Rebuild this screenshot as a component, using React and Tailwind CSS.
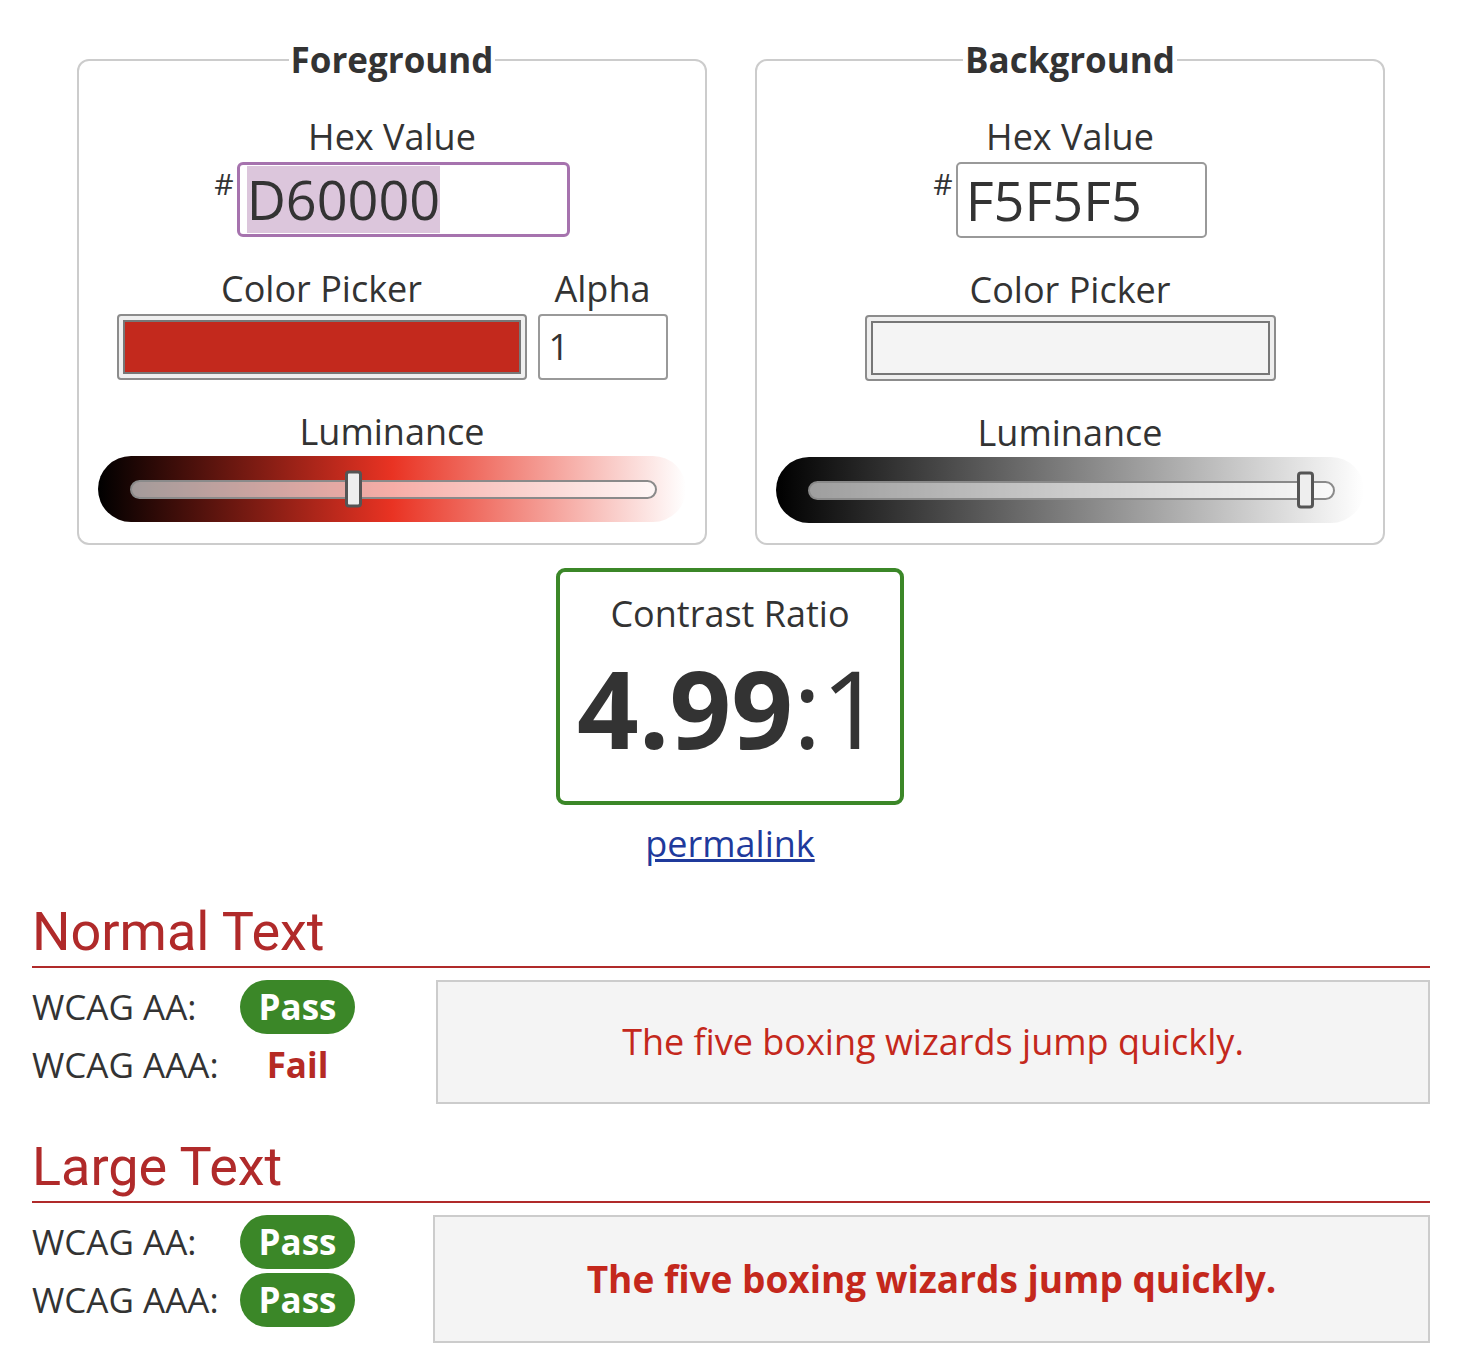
const Label = ({ children }) => (
  <div className="text-[36px] leading-[40px] text-[#333]">{children}</div>
);

const Slider = ({ gradient, thumb }) => (
  <div className={`mt-[4px] flex h-[66px] w-[588px] items-center rounded-full pl-[32px] pr-[29px] ${gradient}`}>
    <div className="relative h-[19px] flex-1 rounded-full border-2 border-[#8a8a8a] bg-white/60">
      <div className={`absolute top-1/2 h-[37px] w-[17px] -translate-y-1/2 rounded-[4px] border-[3px] border-[#555] bg-[#eee] ${thumb}`} />
    </div>
  </div>
);

const ColorBox = ({ swatch, width }) => (
  <div className={`flex h-[66px] ${width} rounded-[4px] border-2 border-[#8c8c8c] bg-[#efefef] p-[4px]`}>
    <div className={`flex-1 border-2 border-[#777] ${swatch}`} />
  </div>
);

const Badge = ({ pass }) =>
  pass ? (
    <div className="w-[115px] rounded-full bg-[#3b8728] text-center text-[35px] font-bold leading-[54px] text-white">
      Pass
    </div>
  ) : (
    <div className="w-[115px] text-center text-[35px] font-bold leading-[54px] text-[#b52a24]">Fail</div>
  );

const Result = ({ title, aa, aaa, large, mt, boxH, boxL }) => (
  <section className={mt}>
    <h2 className="border-b-2 border-[#b02a2a] pb-[4px] font-['Roboto',sans-serif] text-[54px] leading-[60px] text-[#b02a2a]">
      {title}
    </h2>
    <div className="mt-[12px] flex">
      <div className={`flex ${boxL} flex-col gap-[4px]`}>
        {[
          ['WCAG AA:', aa],
          ['WCAG AAA:', aaa],
        ].map(([label, pass]) => (
          <div key={label} className="flex items-center">
            <div className="w-[208px] text-[35px] leading-[54px] text-[#333]">{label}</div>
            <Badge pass={pass} />
          </div>
        ))}
      </div>
      <div
        className={`flex flex-1 items-center justify-center border-2 border-[#ccc] bg-[#f4f4f4] text-[#c4281c] ${boxH} ${
          large ? 'text-[37px] font-bold' : 'text-[36px]'
        }`}
      >
        The five boxing wizards jump quickly.
      </div>
    </div>
  </section>
);

export default function App() {
  return (
    <div className="min-h-[1360px] bg-white pb-[16px] font-['Open_Sans',sans-serif] text-[#333]">
      <div className="ml-[77px] flex gap-[48px] pt-[40px]">
        <fieldset className="flex w-[630px] flex-col items-center rounded-[12px] border-2 border-[#ccc] px-0 pb-[20px] pt-[37px]">
          <legend className="mx-auto px-[2px] text-[35px] font-bold leading-[40px] text-[#333]">Foreground</legend>
          <Label>Hex Value</Label>
          <div className="mt-[5px] flex">
            <span className="mr-[3px] mt-[6px] text-[30px] leading-[32px]">#</span>
            <div className="flex h-[75px] w-[333px] items-center rounded-[6px] border-[3px] border-[#a673ae] pl-[7px]">
              <span className="bg-[#dcc6dc] text-[54px] leading-[67px] text-[#333]">D60000</span>
            </div>
          </div>
          <div className="mt-[32px] flex gap-[11px]">
            <div className="flex flex-col items-center">
              <Label>Color Picker</Label>
              <div className="mt-[5px]">
                <ColorBox swatch="bg-[#c3291d]" width="w-[410px]" />
              </div>
            </div>
            <div className="flex flex-col items-center">
              <Label>Alpha</Label>
              <div className="mt-[5px] flex h-[66px] w-[130px] items-center rounded-[4px] border-2 border-[#999] pl-[9px] text-[36px]">
                1
              </div>
            </div>
          </div>
          <div className="mt-[32px]">
            <Label>Luminance</Label>
          </div>
          <Slider gradient="bg-[linear-gradient(to_right,#000,#e93323_50%,#fff)]" thumb="left-[213px]" />
        </fieldset>

        <fieldset className="flex w-[630px] flex-col items-center rounded-[12px] border-2 border-[#ccc] px-0 pb-[20px] pt-[37px]">
          <legend className="mx-auto px-[2px] text-[35px] font-bold leading-[40px] text-[#333]">Background</legend>
          <Label>Hex Value</Label>
          <div className="mt-[5px] flex">
            <span className="mr-[3px] mt-[6px] text-[30px] leading-[32px]">#</span>
            <div className="flex h-[76px] w-[251px] items-center rounded-[5px] border-2 border-[#999] pl-[8px]">
              <span className="text-[54px] leading-[67px] text-[#333]">F5F5F5</span>
            </div>
          </div>
          <div className="mt-[32px]">
            <Label>Color Picker</Label>
          </div>
          <div className="mt-[5px]">
            <ColorBox swatch="bg-[#f4f4f4]" width="w-[411px]" />
          </div>
          <div className="mt-[32px]">
            <Label>Luminance</Label>
          </div>
          <Slider gradient="bg-[linear-gradient(to_right,#000,#fff)]" thumb="left-[487px]" />
        </fieldset>
      </div>

      <div className="mt-[23px] flex flex-col items-center">
        <div className="flex h-[237px] w-[348px] flex-col items-center rounded-[9px] border-4 border-[#3b8728] pt-[22px]">
          <div className="text-[36px] leading-[40px]">Contrast Ratio</div>
          <div className="mt-[20px] text-[108px] leading-none text-[#333]">
            <span className="font-bold">4.99</span>:1
          </div>
        </div>
        <a href="#" className="mt-[19px] text-[36px] leading-[40px] text-[#1f3a9c] underline">
          permalink
        </a>
      </div>

      <div className="ml-[32px] mr-[30px] mt-[38px]">
        <Result title="Normal Text" aa aaa={false} boxH="h-[124px]" boxL="w-[404px]" />
        <Result title="Large Text" aa aaa large mt="mt-[33px]" boxH="h-[128px]" boxL="w-[401px]" />
      </div>
    </div>
  );
}
